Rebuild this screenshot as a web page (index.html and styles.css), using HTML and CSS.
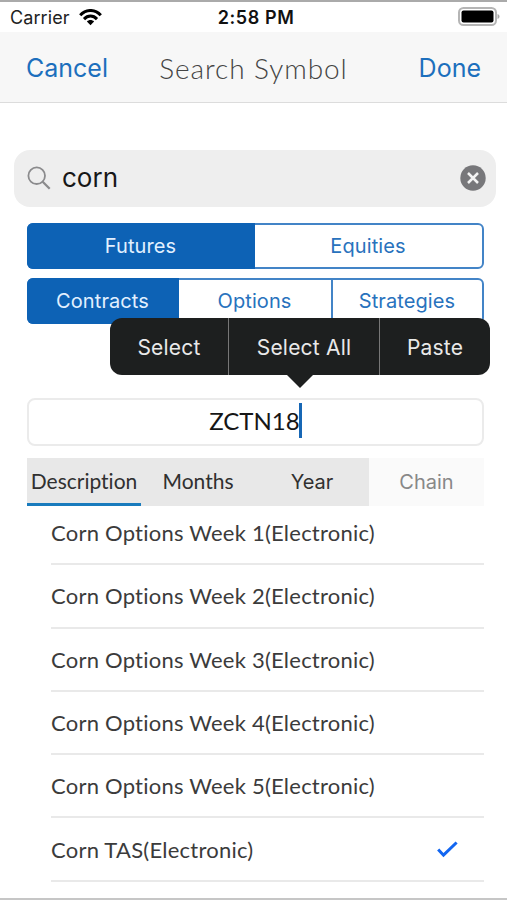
FILE: index.html
```html
<!DOCTYPE html>
<html lang="en">
<head>
<meta charset="utf-8">
<title>Search Symbol</title>
<link rel="stylesheet" href="styles.css">
</head>
<body>
<div class="screen">
  <header class="status">
    <div class="carrier"><span>Carrier</span>
      <svg class="wifi" width="23" height="17" viewBox="0 0 23 17" fill="none" stroke="#000" stroke-width="3"><path d="M1.2 6.2C7-.1 16-.1 21.8 6.2M5 10.1c3.8-4 9.2-4 13 0"/><path d="M11.5 16.3 7.9 12.6c2-2 5.2-2 7.2 0z" fill="#000" stroke="none"/></svg>
    </div>
    <span class="clock">2:58 PM</span>
    <svg class="battery" width="42" height="20" viewBox="0 0 42 20"><rect x="1" y="1" width="37" height="17" rx="4.5" fill="#fff" stroke="#b5b5b5" stroke-width="2"/><rect x="3.5" y="3.5" width="32" height="12" rx="2" fill="#000"/><path d="M39.5 7c2.7.8 2.7 4.200 0 5z" fill="#aaa"/></svg>
  </header>
  <nav class="navbar">
    <a class="action cancel">Cancel</a>
    <h1 class="title">Search Symbol</h1>
    <a class="action done">Done</a>
  </nav>
  <main>
    <div class="search">
      <svg width="24" height="24" viewBox="0 0 24 24" fill="none" stroke="#8b8b8d"><circle cx="9.700" cy="9.700" r="8.300" stroke-width="1.800"/><path d="m15.700 15.700 7 7" stroke-width="2.300"/></svg>
      <span class="query">corn</span>
      <svg class="clear" width="26" height="26" viewBox="0 0 26 26"><circle cx="13" cy="13" r="12.700" fill="#77777a"/><path d="m8 8 10 10M18 8 8 18" stroke="#f3f3f3" stroke-width="2.500"/></svg>
    </div>
    <div class="segments two">
      <div class="segment on"><span>Futures</span></div>
      <div class="segment"><span>Equities</span></div>
    </div>
    <div class="segments three">
      <div class="segment on"><span>Contracts</span></div>
      <div class="segment"><span>Options</span></div>
      <div class="segment"><span>Strategies</span></div>
    </div>
    <div class="field">
      <span class="symbol">ZCTN18</span><i class="caret"></i>
      <div class="menu">
        <span>Select</span><span>Select All</span><span>Paste</span>
      </div>
    </div>
    <div class="tabs">
      <div class="tab active"><span>Description</span></div>
      <div class="tab"><span>Months</span></div>
      <div class="tab year"><span>Year</span></div>
      <div class="tab chain"><span>Chain</span></div>
    </div>
    <ul class="list">
      <li><span>Corn Options Week 1(Electronic)</span></li>
      <li><span>Corn Options Week 2(Electronic)</span></li>
      <li><span>Corn Options Week 3(Electronic)</span></li>
      <li><span>Corn Options Week 4(Electronic)</span></li>
      <li><span>Corn Options Week 5(Electronic)</span></li>
      <li><span>Corn TAS(Electronic)</span>
        <svg class="check" width="21" height="17" viewBox="0 0 21 17" fill="none" stroke="#1266f1" stroke-width="3"><path d="m1.200 8.500 5.300 5.700L19.600 1.500"/></svg></li>
    </ul>
  </main>
</div>
</body>
</html>
```
FILE: styles.css
```css
* { box-sizing: border-box; }
body { margin: 0; background: #fff; font-family: Inter, "Liberation Sans", sans-serif; }
.screen { width: 507px; height: 900px; overflow: hidden; border-top: 2px solid #aaa; border-bottom: 2px solid #c6c6c6; white-space: nowrap; }
.status { height: 30px; display: grid; grid-template-columns: 1fr auto 1fr; align-items: center; padding: 0 7px 0 10px; }
.carrier { display: flex; align-items: center; gap: 9px; font-size: 18px; color: #222; letter-spacing: .1px; }
.clock { font-size: 18px; font-weight: 600; color: #111; letter-spacing: .6px; padding-left: 2px; }
.battery { justify-self: end; }
.navbar { height: 71px; display: grid; grid-template-columns: 1fr auto 1fr; align-items: center; padding: 2px 26px 0; background: #f7f7f7; border-bottom: 1px solid #dcdcdc; }
.action { font-size: 25px; color: #1c6fbd; }
.done { justify-self: end; }
.title { margin: 0; font: 300 28px Lato, sans-serif; color: #444; letter-spacing: .92px; }
main { padding: 47px 23px 0 27px; }
.search { height: 57px; margin: 0 -12px 16px -13px; padding: 0 10px 2px 13px; display: flex; align-items: center; gap: 11px; border-radius: 16px; background: #eee; }
.query { flex: 1; font-size: 26px; color: #171717; }
.segments { height: 46px; display: grid; margin-bottom: 9px; border: 2px solid #4384c7; border-radius: 6px; font-size: 20px; letter-spacing: .1px; color: #2872bd; }
.two { grid-template-columns: 226px 1fr; }
.three { grid-template-columns: 150px 152px 1fr; }
.segment { display: flex; align-items: center; justify-content: center; }
.segment span { margin-left: -1px; }
.segment + .segment { border-left: 2px solid #4384c7; }
.segment.on + .segment { border-left: 0; }
.segment.on { margin: -2px 0 -2px -2px; border-radius: 6px 0 0 6px; background: #0d62b5; color: #e2f0ff; }
.field { position: relative; height: 48px; margin-top: 74px; display: flex; justify-content: center; align-items: center; border: 2px solid #ebebeb; border-radius: 8px; }
.symbol { font: 24px Lato, sans-serif; color: #161616; margin-bottom: 4px; }
.caret { width: 3px; height: 35px; background: #1767b5; margin: -3px 0 0 -1px; }
.menu { position: absolute; top: -82px; left: 81px; width: 380px; height: 57px; display: grid; grid-template-columns: 118px 151px 1fr; border-radius: 12px; background: #1d1f1f; color: #e9e9e9; font-size: 21px; letter-spacing: .2px; }
.menu::after { content: ""; position: absolute; top: 56px; left: 176px; border: 14px solid transparent; border-top-color: #1d1f1f; border-bottom: 0; }
.menu span { display: flex; align-items: center; justify-content: center; padding-top: 1px; }
.menu span + span { border-left: 1px solid #777; }
.tabs { height: 48px; margin-top: 12px; display: grid; grid-template-columns: 114px 114px 114px 1fr; background: #e8e8e8; color: #303030; font: 21px Lato, sans-serif; font-variant-ligatures: none; }
.tab { display: flex; align-items: center; justify-content: center; padding-bottom: 3px; }
.active { border-bottom: 3px solid #197bbd; padding-bottom: 0; }
.year, .chain { font-family: Inter, sans-serif; font-size: 20px; padding-bottom: 0; }
.chain { background: #fafafa; color: #888; }
.list { margin: -4px 0 0; padding: 0 0 0 24px; list-style: none; }
.list li { height: 63.3px; display: flex; align-items: center; justify-content: space-between; padding-right: 26px; border-bottom: 2px solid #e9e9e9; font: 22px Lato, sans-serif; letter-spacing: .23px; color: #3b3b3b; }
```
